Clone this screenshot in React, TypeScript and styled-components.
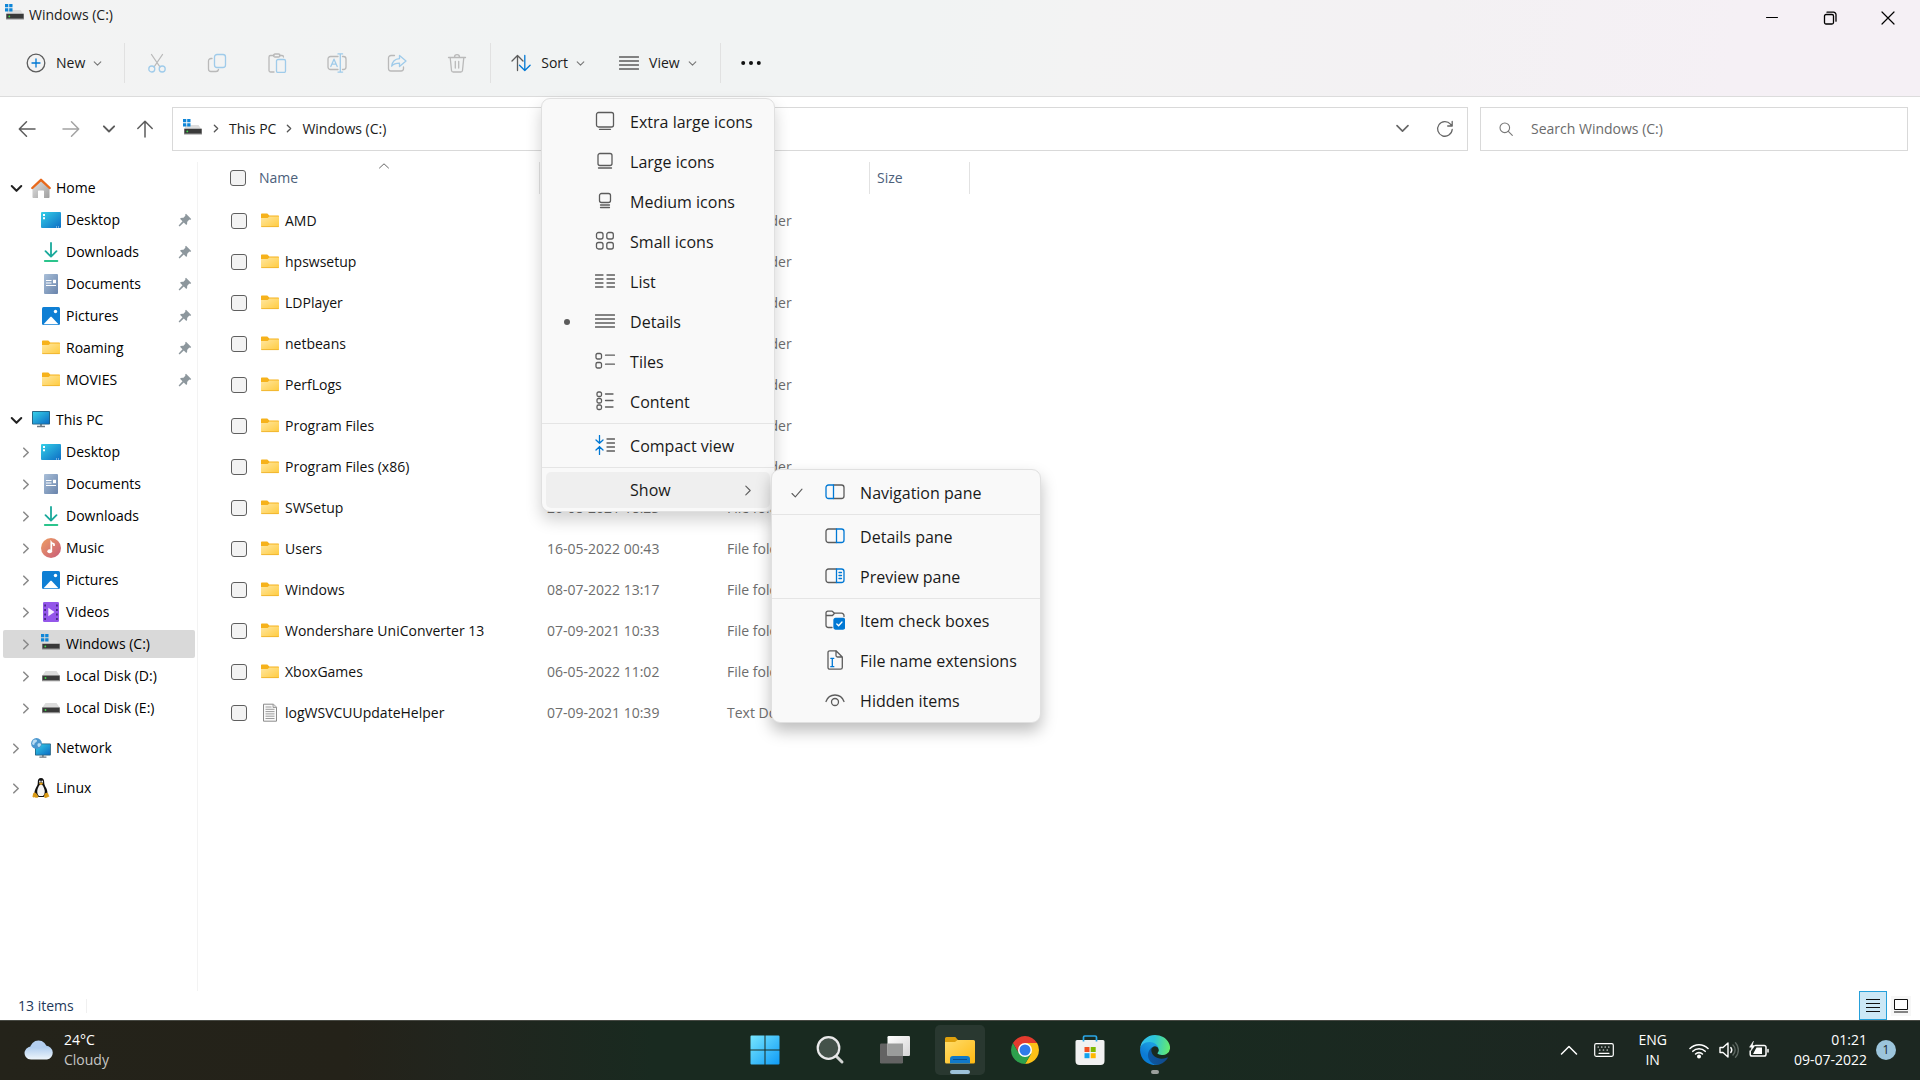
import React from 'react';
import styled, { createGlobalStyle, css } from 'styled-components';

const GlobalStyle = createGlobalStyle`
  *, *::before, *::after { box-sizing: border-box; }
  body { margin: 0; background: #fff; }
  body, button, input { font-family: "Open Sans", "Noto Sans", sans-serif; font-size: 14px; line-height: 20px; }
  button { margin: 0; padding: 0; border: 0; background: none; color: inherit; text-align: left; white-space: nowrap; }
  a { color: inherit; text-decoration: none; }
  svg { display: block; flex: none; }
  ul { list-style: none; margin: 0; padding: 0; }
`;

/* ---------- shell ---------- */

const Shell = styled.div`
  display: flex;
  flex-direction: column;
  min-height: 100vh;
  color: #1b1b1b;
`;

const Header = styled.header`
  background: linear-gradient(100deg, #f3f3f3 0%, #f1f3f3 28%, #f1f3f3 48%, #f3f3f3 56%, #f3f1f3 74%, #f5f0f5 90%);
  border-bottom: 1px solid #dcdcdc;
`;

const TitleBar = styled.div`
  display: flex;
  justify-content: space-between;
  height: 36px;
`;

const Title = styled.h1`
  display: flex;
  gap: 4px;
  margin: 0;
  padding: 4px 0 0 5px;
  font-size: 14px;
  font-weight: 400;
  line-height: 22px;
`;

const WindowButtons = styled.div`
  display: flex;
  padding-right: 3px;
`;

const WindowButton = styled.button`
  display: grid;
  place-items: center;
  width: 58px;
  height: 36px;
`;

const Toolbar = styled.div`
  display: flex;
  align-items: center;
  height: 60px;
  padding: 0 0 6px 16px;
`;

const ToolGroup = styled.div<{ $gap?: number; $pad?: string }>`
  display: flex;
  align-items: center;
  gap: ${p => p.$gap ?? 0}px;
  height: 40px;
  padding: ${p => p.$pad ?? '0'};
  border-right: 1px solid #e1e1e1;
`;

const ToolButton = styled.button`
  display: flex;
  align-items: center;
  gap: 10px;
  height: 40px;
  padding: 0 12px 0 10px;
`;

const ToolLabel = styled.span`
  display: flex;
  align-items: center;
  gap: 8px;
`;

const IconButton = styled.button<{ $w: number }>`
  display: grid;
  place-items: center;
  width: ${p => p.$w}px;
  height: 40px;
`;

/* ---------- address row ---------- */

const NavRow = styled.div`
  display: flex;
  align-items: center;
  height: 65px;
  padding: 0 12px 2px 8px;
`;

const NavButtons = styled.nav`
  display: grid;
  grid-template-columns: 38px 50px 26px 50px;
`;

const Field = styled.div`
  display: flex;
  align-items: center;
  height: 44px;
  border: 1px solid #d9d9d9;
  background: #fff;
`;

const AddressBox = styled(Field)`
  flex: 1;
  padding-left: 10px;
`;

const Crumbs = styled.div`
  display: flex;
  align-items: center;
  flex: 1;
  gap: 10px;
`;

const SearchBox = styled(Field).attrs({ as: 'label' })`
  flex: 0 1 428px;
  gap: 18px;
  margin-left: 12px;
  padding-left: 18px;
`;

const SearchInput = styled.input`
  flex: 1;
  min-width: 0;
  border: 0;
  outline: 0;
  padding: 0;
  background: none;
  &::placeholder { color: #6b6b6b; opacity: 1; }
`;

/* ---------- body ---------- */

const Body = styled.div`
  display: flex;
  flex: 1;
`;

const Sidebar = styled.nav`
  width: 198px;
  padding: 10px 2px 10px 3px;
  border-right: 1px solid #f3f3f3;
`;

const Tree = styled.ul`
  & + & { margin-top: 8px; }
`;

const TreeItem = styled.li`
  padding: 2px 0;
`;

const TreeLink = styled.a<{ $child?: boolean; $selected?: boolean }>`
  display: flex;
  align-items: center;
  height: 28px;
  padding-left: ${p => (p.$child ? 16 : 6)}px;
  padding-right: 3px;
  border-radius: 2px;
  color: #000;
  background: ${p => (p.$selected ? '#d9d9d9' : 'none')};
`;

const Twisty = styled.span`
  display: grid;
  place-items: center;
  width: 14px;
  margin-right: 8px;
`;

const TreeIcon = styled.span`
  display: grid;
  place-items: center;
  width: 20px;
  height: 20px;
  margin-right: 5px;
`;

const TreeText = styled.span`
  flex: 1;
  white-space: nowrap;
`;

const Main = styled.main`
  flex: 1;
  min-width: 0;
`;

const Table = styled.table`
  width: 100%;
  table-layout: fixed;
  border-collapse: collapse;
  border-spacing: 0;
  th, td { padding: 0; text-align: left; font-weight: 400; white-space: nowrap; }
  th { height: 38px; vertical-align: top; color: #4c607a; }
  td { height: 41px; color: #6d6d6d; }
`;

const HeadCell = styled.div<{ $line?: boolean }>`
  position: relative;
  display: flex;
  align-items: center;
  height: 32px;
  padding-left: ${p => (p.$line ? 7 : 0)}px;
  border-right: ${p => (p.$line ? '1px solid #e2e2e2' : '0')};
`;

const SortMark = styled.span`
  position: absolute;
  top: 1px;
  left: 126px;
`;

const CheckHolder = styled.div<{ $head?: boolean }>`
  display: flex;
  align-items: center;
  height: ${p => (p.$head ? 32 : 40)}px;
  padding-left: ${p => (p.$head ? 32 : 33)}px;
`;

const Check = styled.input.attrs({ type: 'checkbox' })`
  appearance: none;
  width: 16px;
  height: 16px;
  margin: 0;
  border: 1px solid #5f5f5f;
  border-radius: 3px;
  background: #f3f3f3;
`;

const FileName = styled.div`
  display: flex;
  align-items: center;
  gap: 6px;
  height: 40px;
  padding-left: 9px;
  color: #111;
`;

const CellText = styled.span`
  padding-left: 7px;
`;

const StatusBar = styled.footer`
  display: flex;
  align-items: center;
  justify-content: space-between;
  height: 29px;
  padding: 0 9px 0 18px;
  color: #1e395b;
`;

const StatusCount = styled.span`
  padding-right: 12px;
  line-height: 14px;
  border-right: 1px solid #f0f0f0;
`;

const StatusViews = styled.div`
  display: flex;
  align-items: center;
  gap: 4px;
`;

const StatusView = styled.button<{ $active?: boolean }>`
  display: grid;
  place-items: center;
  width: 20px;
  height: 20px;
  background: #f7f7f7;
  ${p => p.$active && css`
    width: 28px;
    height: 29px;
    background: #cce8f6;
    border: 1px solid #26a0da;
  `}
`;

/* ---------- menus ---------- */

const MenuAnchor = styled.div`
  position: relative;
`;

const MenuPanel = styled.ul<{ $sub?: boolean }>`
  position: absolute;
  z-index: ${p => (p.$sub ? 20 : 10)};
  top: ${p => (p.$sub ? '3px' : '55px')};
  left: ${p => (p.$sub ? '229px' : '-68px')};
  width: ${p => (p.$sub ? 270 : 234)}px;
  padding: 3px 0 1px;
  border: 1px solid #e0e0e0;
  border-radius: 9px;
  background: #f9f9f9;
  box-shadow: 0 8px 16px rgba(0, 0, 0, ${p => (p.$sub ? 0.26 : 0.18)});
`;

const MenuRow = styled.li<{ $divided?: boolean }>`
  position: relative;
  padding: 2px 4px;
  ${p => p.$divided && css`
    padding-top: 6px;
    &::before {
      content: "";
      position: absolute;
      top: 1px;
      left: 0;
      right: 0;
      height: 1px;
      background: #e5e5e5;
    }
  `}
`;

const MenuButton = styled.button<{ $hot?: boolean }>`
  display: grid;
  grid-template-columns: 34px 43px 1fr auto;
  align-items: center;
  width: 100%;
  height: 36px;
  padding: 0 18px 0 7px;
  border-radius: 5px;
  font-size: 16px;
  color: #1a1a1a;
  background: ${p => (p.$hot ? '#efefef' : 'none')};
`;

const Mark = styled.span`
  display: grid;
  place-items: center;
  width: 28px;
`;

const MenuIcon = styled.span`
  display: block;
  padding-left: 8px;
  height: 22px;
`;

/* ---------- taskbar ---------- */

const Taskbar = styled.footer`
  display: grid;
  grid-template-columns: 1fr auto 1fr;
  align-items: center;
  height: 60px;
  padding: 0 24px 1px;
  border-top: 1px solid #474943;
  color: #fff;
  background: linear-gradient(90deg, #24231a 0%, #242219 18%, #21251e 24%, #192a20 34%, #192a20 62%, #1c2721 82%, #1c2721 100%);
`;

const Weather = styled.button`
  display: flex;
  align-items: center;
  gap: 10px;
  justify-self: start;
`;

const Faded = styled.span`
  color: #c6c6c4;
`;

const Apps = styled.div`
  display: flex;
  gap: 15px;
`;

const AppButton = styled.button<{ $active?: boolean }>`
  display: flex;
  flex-direction: column;
  align-items: center;
  width: 50px;
  height: 50px;
  padding-top: 10px;
  border-radius: 5px;
  background: ${p => (p.$active ? '#293830' : 'none')};
`;

const Running = styled.span<{ $wide?: boolean }>`
  width: ${p => (p.$wide ? 20 : 8)}px;
  height: 4px;
  margin-top: 5px;
  border-radius: 2px;
  background: ${p => (p.$wide ? '#9cc3da' : '#9b9f9c')};
`;

const Tray = styled.div`
  display: flex;
  align-items: center;
  justify-self: end;
`;

const TrayButton = styled.button<{ $gap: number }>`
  display: flex;
  gap: 10px;
  margin-left: ${p => p.$gap}px;
`;

const Stack = styled.span<{ $align?: 'left' | 'center' | 'right' }>`
  display: flex;
  flex-direction: column;
  text-align: ${p => p.$align ?? 'left'};
`;

const Badge = styled.span`
  display: grid;
  place-items: center;
  width: 20px;
  height: 20px;
  margin-left: 9px;
  border-radius: 50%;
  background: #9cc5dc;
  color: #1b2a30;
  font-size: 12px;
`;

/* ---------- icons ---------- */

const GRAY = '#5c5c5c';
const BLUE = '#0078d4';

type SvgProps = { w?: number; h?: number; children: React.ReactNode; stroke?: string; sw?: number; box?: string };
const Line = ({ w = 20, h = 20, stroke = GRAY, sw = 1.3, box, children }: SvgProps) => (
  <svg width={w} height={h} viewBox={box ?? `0 0 ${w} ${h}`} fill="none" stroke={stroke} strokeWidth={sw}
    strokeLinecap="round" strokeLinejoin="round" aria-hidden="true">{children}</svg>
);

const ChevronDown = ({ s = 7, color = '#777', sw = 1.1 }) => (
  <Line w={s + 2} h={s + 2} stroke={color} sw={sw} box="0 0 9 9"><path d="M1.2 2.8 4.5 6.1 7.8 2.8" /></Line>
);
const ChevronRight = ({ w = 6, h = 11, color = '#8a8a8a', sw = 1.6 }) => (
  <Line w={w + 2} h={h} stroke={color} sw={sw} box="0 0 8 11"><path d="M1.8 1.2 6.2 5.5 1.8 9.8" /></Line>
);

const DriveC = () => (
  <svg width="20" height="20" viewBox="0 0 20 20" aria-hidden="true">
    <path d="M3 6h12.5l3.5 5H1z" fill="#dedede" />
    <path d="M0 0h3.3v3.3H0zM4.2 0h3.3v3.3H4.2zM0 4.2h3.3v3.3H0zM4.2 4.2h3.3v3.3H4.2z" fill="#0f86d8" />
    <rect x="1" y="9.5" width="18" height="6" rx=".5" fill="#8c8c8c" />
    <rect x="1.6" y="10" width="16.8" height="4.4" fill="#3a3a3a" />
    <circle cx="4.3" cy="12.4" r=".9" fill="#3fe04b" />
  </svg>
);
const Drive = () => (
  <svg width="20" height="20" viewBox="0 0 20 20" aria-hidden="true">
    <path d="M4.5 5h11L19 10H1z" fill="#dcdcdc" />
    <rect x="1" y="9.2" width="18" height="6" rx=".5" fill="#8c8c8c" />
    <rect x="1.6" y="9.8" width="16.8" height="4.2" fill="#3a3a3a" />
    <circle cx="4.5" cy="12" r=".9" fill="#3fe04b" />
  </svg>
);
const Folder = () => (
  <svg width="18" height="20" viewBox="0 0 18 20" aria-hidden="true">
    <defs><linearGradient id="fold" x1="0" y1="0" x2="1" y2="1">
      <stop offset="0" stopColor="#ffe7a1" /><stop offset="1" stopColor="#ffcb3e" /></linearGradient></defs>
    <path d="M0 3.600C0 3 .4 2.600 1 2.600h5.300l2 2H17c.6 0 1 .4 1 1V9H0z" fill="#f6b21b" />
    <path d="M0 7h6.600L8.400 5.400H18V15.400c0 .4-.3.7-.7.7H.7c-.4 0-.7-.3-.7-.7z" fill="url(#fold)" />
    <path d="M.4 15.600h17.200" stroke="#efb22d" strokeWidth=".9" />
  </svg>
);
const TextFile = () => (
  <svg width="18" height="20" viewBox="0 0 18 20" aria-hidden="true">
    <path d="M2.500 1.200h10l3 3v14h-13z" fill="#fafafa" stroke="#8b8b8b" />
    <path d="M12 1.200v3.300h3.400" fill="#ddd" stroke="#8b8b8b" strokeWidth=".8" />
    <path d="M4.500 4h6M4.500 6.300h9M4.500 8.600h9M4.500 10.900h9M4.500 13.200h9M4.500 15.500h9" stroke="#9c9c9c" />
  </svg>
);
const HomeIcon = () => (
  <svg width="20" height="20" viewBox="0 0 20 20" aria-hidden="true">
    <defs><linearGradient id="wall" x1="0" y1="0" x2="1" y2="1"><stop offset="0" stopColor="#e4e4e4" /><stop offset="1" stopColor="#9f9f9f" /></linearGradient></defs>
    <path d="M1.500 9.500 10 2l8.500 7.500V19c0 .6-.4 1-1 1H13v-6.500c0-.6-.4-1-1-1H8c-.6 0-1 .4-1 1V20H2.500c-.6 0-1-.4-1-1z" fill="url(#wall)" />
    <path d="M1.300 10 10 1.800 18.700 10" fill="none" stroke="#e8691c" strokeWidth="2.400" strokeLinecap="round" strokeLinejoin="round" />
  </svg>
);
const DesktopIcon = () => (
  <svg width="20" height="20" viewBox="0 0 20 20" aria-hidden="true">
    <defs><linearGradient id="desk" x1="0" y1="0" x2="1" y2="1"><stop offset="0" stopColor="#35d0e8" /><stop offset="1" stopColor="#0d6cc4" /></linearGradient></defs>
    <rect y="2" width="20" height="16" rx="1" fill="url(#desk)" />
    <path d="M2 4h2v2H2zM2 7.200h2v2H2z" fill="#fff" />
    <path d="M15 17h1M17 17h1" stroke="#fff" strokeWidth=".8" />
  </svg>
);
const DownloadIcon = () => (
  <svg width="20" height="20" viewBox="0 0 20 20" fill="none" strokeWidth="1.8" strokeLinecap="round" strokeLinejoin="round" aria-hidden="true">
    <path d="M10 1v13.500M4.500 9.200l5.500 5.500 5.500-5.500" stroke="#19a99b" />
    <path d="M3.800 19h12.600" stroke="#2bc48c" />
  </svg>
);
const DocumentIcon = () => (
  <svg width="20" height="20" viewBox="0 0 20 20" aria-hidden="true">
    <defs><linearGradient id="doc" x1="0" y1="0" x2="1" y2="1"><stop offset="0" stopColor="#a9bfd8" /><stop offset="1" stopColor="#6883ab" /></linearGradient></defs>
    <rect x="3" y="0" width="14" height="20" rx="1" fill="url(#doc)" />
    <path d="M5 6.500h5.500M5 9h5.500M5 11.500h10" stroke="#fff" strokeWidth="1.200" />
    <path d="M12 5.800h3v3.400h-3z" fill="#fff" />
  </svg>
);
const PictureIcon = () => (
  <svg width="20" height="20" viewBox="0 0 20 20" aria-hidden="true">
    <rect x="1" y="1" width="18" height="18" rx="1.500" fill="#0f7fd4" />
    <path d="M2.500 18.300 9.300 11c.4-.4 1-.4 1.400 0l6.800 7.300z" fill="#fff" />
    <circle cx="14.500" cy="5.500" r="1.700" fill="#fff" />
  </svg>
);
const MonitorShape = ({ x = 1, y = 2, s = 1 }) => (
  <g transform={`translate(${x} ${y}) scale(${s})`}>
    <path d="M5 15.500h8M9 13v2.500" stroke="#6d7880" strokeWidth="1.600" />
    <rect width="18" height="13.600" rx=".8" fill="#24607f" />
    <rect x=".9" y=".9" width="16.200" height="11.800" fill="url(#desk)" />
  </g>
);
const PcIcon = () => (
  <svg width="20" height="20" viewBox="0 0 20 20" aria-hidden="true"><MonitorShape y={1} /></svg>
);
const NetworkIcon = () => (
  <svg width="20" height="20" viewBox="0 0 20 20" aria-hidden="true">
    <MonitorShape x={4} y={5.5} s={0.88} />
    <circle cx="5.500" cy="5.500" r="5.400" fill="#4b97cf" />
    <path d="M2 2.500c2-2 4.500-1 4 .5S3.500 4.500 3.500 6s-1 1-2.500 0zM7 5.500c1.500-.5 3 0 3 1S8.500 9.500 7.500 9 6 6 7 5.500z" fill="#b9dcf3" />
  </svg>
);
const MusicIcon = () => (
  <svg width="20" height="20" viewBox="0 0 20 20" aria-hidden="true">
    <defs><linearGradient id="mus" x1="0" y1="0" x2="1" y2="1"><stop offset="0" stopColor="#eea063" /><stop offset="1" stopColor="#c85a7a" /></linearGradient></defs>
    <circle cx="10" cy="10" r="10" fill="url(#mus)" />
    <ellipse cx="8.700" cy="13.300" rx="2.400" ry="2" fill="#fff" />
    <path d="M10.300 13.300V4.500c.8 1.200 2 .8 2.700 1.500v2" fill="none" stroke="#fff" strokeWidth="1.700" />
  </svg>
);
const VideoIcon = () => (
  <svg width="20" height="20" viewBox="0 0 20 20" aria-hidden="true">
    <rect x="2" y="0" width="16" height="20" rx="1.200" fill="#9457ea" />
    <path d="M3.200 2.500h1.800v2H3.200zM3.200 7h1.800v2H3.200zM3.200 11.500h1.800v2H3.200zM3.200 16h1.800v2H3.200zM15 2.500h1.800v2H15zM15 7h1.800v2H15zM15 11.500h1.800v2H15zM15 16h1.800v2H15z" fill="#472a86" />
    <path d="M7.300 5.800 13.500 10l-6.200 4.200z" fill="#f6efff" />
  </svg>
);
const TuxIcon = () => (
  <svg width="20" height="20" viewBox="0 0 20 20" aria-hidden="true">
    <path d="M10 0C7.600 0 6.600 1.800 6.800 4.500c.1 2.500-1 3.500-2.100 5.800C3.800 12.200 3.300 14 3.600 16l4 3h5l3.800-3c.2-2-.2-4-1.200-5.900-1.100-2.200-2-3.200-2-5.600C13.200 1.600 12.300 0 10 0z" fill="#111" />
    <path d="M10 6.500c-2 0-3 3.500-3.600 5.500-.5 2 0 4.500 1.600 6h4c1.600-1.500 2.100-4 1.600-6C13 10 12 6.500 10 6.500z" fill="#f4f4f4" />
    <ellipse cx="8.900" cy="3.700" rx=".8" ry="1.100" fill="#fff" /><ellipse cx="11.200" cy="3.700" rx=".8" ry="1.100" fill="#fff" />
    <path d="M8 5.500c1-1.200 3-1.200 4 0-.8 1.700-3.200 1.700-4 0z" fill="#e0a01b" />
    <path d="M1.500 18.500c.5-1.500.3-3.700 1.800-4 1.500-.2 2.500 1.500 3.700 3.300.8 1.300-.3 2.200-1.600 2-1.600-.3-4.200-.2-3.900-1.300zM18.500 18.300c-1.200-.8-.8-3.300-2.300-3.500-1.500-.3-3 .8-3 2.600 0 1.300-.2 2.500 1.200 2.500s3.100-1 4.100-1.600z" fill="#d99a16" />
  </svg>
);
const PinIcon = () => (
  <svg width="14" height="14" viewBox="0 0 14 14" aria-hidden="true">
    <path d="M8 .8 13.200 6l-1 .9-.9-.3-2.200 2.300c.3 1.300 0 2.300-.8 3.100L5.800 9.500 1.600 13.400l-1-1L4.500 8.200 2 5.700c.8-.8 1.800-1.100 3.100-.8l2.300-2.200-.3-.9z" fill="#8d979d" />
  </svg>
);

const DIM = '#b9b9b9';
const PALE = '#9fcbea';

const toolIcons: { label: string; art: React.ReactNode }[] = [
  { label: 'Cut', art: <><path d="M4.500 1.500 13 14M15.500 1.500 7 14" /><g stroke={PALE}><circle cx="4.800" cy="16" r="3" /><circle cx="15.200" cy="16" r="3" /></g></> },
  { label: 'Copy', art: <><path d="M5 5.500H4a2.500 2.500 0 0 0-2.500 2.500v8A2.500 2.500 0 0 0 4 18.500h5a2.500 2.500 0 0 0 2.500-2" /><rect x="7.500" y="1.500" width="11" height="13" rx="2.500" stroke={PALE} /></> },
  { label: 'Paste', art: <><path d="M7 2.500H3.500A1.500 1.500 0 0 0 2 4v13.500A1.500 1.500 0 0 0 3.500 19H7M12.500 2.500H15A1.500 1.500 0 0 1 16.500 4" /><rect x="6.500" y="1" width="6.500" height="3" rx="1.500" /><rect x="9.500" y="6.500" width="9" height="13" rx="1.500" stroke={PALE} /></> },
  { label: 'Rename', art: <><path d="M11 3.500H3.500a2.500 2.500 0 0 0-2.500 2.500v8a2.500 2.500 0 0 0 2.500 2.500H11M15.500 3.500h1a2.500 2.500 0 0 1 2.500 2.500v8a2.500 2.500 0 0 1-2.500 2.500h-1" /><g stroke={PALE}><path d="M3.800 13.500 7 6.200l3.200 7.300M5 11.200h4M13.300 1v18M11 .9h4.600M11 19.100h4.600" /></g></> },
  { label: 'Share', art: <><path d="M7.500 2.500H4A2.500 2.500 0 0 0 1.500 5v10.500A2.500 2.500 0 0 0 4 18h10a2.500 2.500 0 0 0 2.500-2.500V14" /><path d="M12.500 2.500 19 8l-6.500 5.500v-3.300c-3.500 0-6 .8-7.800 3C5.200 9 7.800 6 12.500 5.700z" stroke={PALE} /></> },
  { label: 'Delete', art: <path d="M1.500 4.500h17M3.200 4.500l1.300 13a1.700 1.700 0 0 0 1.700 1.500h7.600a1.700 1.700 0 0 0 1.700-1.500l1.300-13M7.500 4.200a2.500 2.500 0 0 1 5 0M8.300 8.500v6.500M11.700 8.500v6.500" /> },
];

const Lines = () => <path d="M.5 4h19M.5 8h19M.5 12h19M.5 16h19" />;
const Pane = ({ x, children }: { x: 'left' | 'right'; children?: React.ReactNode }) => (
  <>
    {x === 'left'
      ? <><path d="M8.500 3H16.500a2.500 2.500 0 0 1 2.500 2.500v8.500a2.500 2.500 0 0 1-2.500 2.500H8.500" /><path stroke={BLUE} d="M8.500 3H3.500A2.500 2.500 0 0 0 1 5.500V14a2.500 2.500 0 0 0 2.500 2.500h5z" /></>
      : <><path d="M11.500 3H3.500A2.500 2.500 0 0 0 1 5.500V14a2.500 2.500 0 0 0 2.500 2.500h8" /><path stroke={BLUE} d="M11.500 3h5A2.500 2.500 0 0 1 19 5.500V14a2.500 2.500 0 0 1-2.500 2.500h-5z" /></>}
    {children}
  </>
);

type MenuEntry = { label: string; art?: React.ReactNode; mark?: 'dot' | 'check'; divided?: boolean };

const viewMenu: MenuEntry[] = [
  { label: 'Extra large icons', art: <><rect x="1.500" y="1.500" width="17" height="14.500" rx="2" /><path d="M4.500 18.300h11" /></> },
  { label: 'Large icons', art: <><rect x="3" y="2.500" width="14" height="12" rx="2" /><path d="M3.500 17h13" /></> },
  { label: 'Medium icons', art: <><rect x="4.500" y="2.500" width="11" height="9" rx="2" /><path d="M5.500 14h9M5.500 16.500h9" /></> },
  { label: 'Small icons', art: <><rect x="1.500" y="1.500" width="6.500" height="6.500" rx="2" /><rect x="11.800" y="1.500" width="6.500" height="6.500" rx="2" /><rect x="1.500" y="11.500" width="6.500" height="6.500" rx="2" /><rect x="11.800" y="11.500" width="6.500" height="6.500" rx="2" /></> },
  { label: 'List', art: <path d="M.5 4H8M.5 8H8M.5 12H8M.5 16H8M12 4h7.500M12 8h7.500M12 12h7.500M12 16h7.500" /> },
  { label: 'Details', mark: 'dot', art: <Lines /> },
  { label: 'Tiles', art: <><rect x="1" y="2.500" width="5.500" height="5.500" rx="1.500" /><rect x="1" y="11.500" width="5.500" height="5.500" rx="1.500" /><path d="M10.500 4.200h9M10.500 13.200h9" /></> },
  { label: 'Content', art: <><rect x="2" y="1" width="4.500" height="4.500" rx="1.500" /><rect x="2" y="7.500" width="4.500" height="4.500" rx="1.500" /><rect x="2" y="14" width="4.500" height="4.500" rx="1.500" /><path d="M10.500 3H18M10.500 9.500H18M10.500 16H18" /></> },
  { label: 'Compact view', divided: true, art: <><path d="M12 4h7.500M12 8h7.500M12 12h7.500M12 16h7.500" /><path stroke={BLUE} d="M4.500.5V8M1 5l3.500 3.300L8 5M4.500 19.500v-8M1 15l3.500-3.300L8 15" /></> },
];

const showMenu: MenuEntry[] = [
  { label: 'Navigation pane', mark: 'check', art: <Pane x="left" /> },
  { label: 'Details pane', divided: true, art: <Pane x="right" /> },
  { label: 'Preview pane', art: <Pane x="right"><path stroke={BLUE} d="M14 6.500h2.500M14 9.500h2.500M14 12.500h2.500" /></Pane> },
  { label: 'Item check boxes', divided: true, art: <><path d="M7 17.500H3.500A2.500 2.500 0 0 1 1 15V3A1.800 1.800 0 0 1 2.800 1.200h4.400L9.500 3.200h7A2.500 2.500 0 0 1 19 5.700v.8M1 5.500h6.500l2-2.200" /><rect x="9" y="8.500" width="10.500" height="10.500" rx="1.500" fill={BLUE} stroke={BLUE} /><path d="m11.800 14 1.800 1.800 3.400-3.800" stroke="#fff" /></> },
  { label: 'File name extensions', art: <><path d="M11 .8H4.800A1.800 1.800 0 0 0 3 2.600v14.800a1.800 1.800 0 0 0 1.800 1.800h10.700a1.800 1.800 0 0 0 1.800-1.800V7L11 .8v4.700A1.500 1.500 0 0 0 12.500 7h4.800" /><path stroke={BLUE} d="M7.300 8.500v8M5.800 8.300h3M5.800 16.700h3" /></> },
  { label: 'Hidden items', art: <><circle cx="10" cy="12" r="3.500" /><path d="M1 11.500C2.500 7.300 5.800 5 10 5s7.500 2.300 9 6.500" /></> },
];

const MenuItem = ({ entry }: { entry: MenuEntry }) => (
  <MenuRow $divided={entry.divided} role="none">
    <MenuButton role="menuitem">
      <Mark>
        {entry.mark === 'dot' && <svg width="6" height="6" aria-hidden="true"><circle cx="3" cy="3" r="3" fill={GRAY} /></svg>}
        {entry.mark === 'check' && <Line w={12} h={10} sw={1.1}><path d="M1 5.500 4.300 8.800 11 1.200" /></Line>}
      </Mark>
      <MenuIcon><Line>{entry.art}</Line></MenuIcon>
      <span>{entry.label}</span>
    </MenuButton>
  </MenuRow>
);

const quickAccess: [string, React.ReactNode][] = [
  ['Desktop', <DesktopIcon />], ['Downloads', <DownloadIcon />], ['Documents', <DocumentIcon />],
  ['Pictures', <PictureIcon />], ['Roaming', <Folder />], ['MOVIES', <Folder />],
];
const thisPc: [string, React.ReactNode][] = [
  ['Desktop', <DesktopIcon />], ['Documents', <DocumentIcon />], ['Downloads', <DownloadIcon />],
  ['Music', <MusicIcon />], ['Pictures', <PictureIcon />], ['Videos', <VideoIcon />],
  ['Windows (C:)', <DriveC />], ['Local Disk (D:)', <Drive />], ['Local Disk (E:)', <Drive />],
];

type NodeProps = { text: string; icon: React.ReactNode; child?: boolean; open?: boolean; leaf?: boolean; pinned?: boolean; selected?: boolean };
const TreeNode = ({ text, icon, child, open, leaf, pinned, selected }: NodeProps) => (
  <TreeItem>
    <TreeLink href="#" $child={child} $selected={selected}>
      <Twisty>{!leaf && (open ? <ChevronDown s={11} color="#222" sw={1.4} /> : <ChevronRight />)}</Twisty>
      <TreeIcon>{icon}</TreeIcon>
      <TreeText>{text}</TreeText>
      {pinned && <PinIcon />}
    </TreeLink>
  </TreeItem>
);

const files: { name: string; type: string; date?: string }[] = [
  { name: 'AMD', type: 'File folder' },
  { name: 'hpswsetup', type: 'File folder' },
  { name: 'LDPlayer', type: 'File folder' },
  { name: 'netbeans', type: 'File folder' },
  { name: 'PerfLogs', type: 'File folder' },
  { name: 'Program Files', type: 'File folder' },
  { name: 'Program Files (x86)', type: 'File folder' },
  { name: 'SWSetup', type: 'File folder', date: '26-08-2021 18:23' },
  { name: 'Users', type: 'File folder', date: '16-05-2022 00:43' },
  { name: 'Windows', type: 'File folder', date: '08-07-2022 13:17' },
  { name: 'Wondershare UniConverter 13', type: 'File folder', date: '07-09-2021 10:33' },
  { name: 'XboxGames', type: 'File folder', date: '06-05-2022 11:02' },
  { name: 'logWSVCUUpdateHelper', type: 'Text Doc', date: '07-09-2021 10:39' },
];

const apps: { name: string; active?: boolean; running?: boolean; art: React.ReactNode }[] = [
  { name: 'Start', art: <><defs><linearGradient id="win" x1="0" y1="0" x2="1" y2="1"><stop offset="0" stopColor="#77e6ff" /><stop offset="1" stopColor="#0f9bf5" /></linearGradient></defs><path d="M.5 1.500a1 1 0 0 1 1-1h13v14h-14zM15.500.5h13a1 1 0 0 1 1 1v13h-14zM.5 15.500h14v14h-13a1 1 0 0 1-1-1zM15.500 15.500h14v13a1 1 0 0 1-1 1h-13z" fill="url(#win)" /></> },
  { name: 'Search', art: <><path d="m20.500 20.500 6.500 6.500" stroke="#d3d6d4" strokeWidth="3" strokeLinecap="round" /><circle cx="13.500" cy="13" r="10.800" fill="#44524a" stroke="#e9e9ea" strokeWidth="2.200" /></> },
  { name: 'Task view', art: <><defs><linearGradient id="tv" x1="0" y1="0" x2="1" y2="1"><stop offset="0" stopColor="#fff" /><stop offset="1" stopColor="#d5d5d5" /></linearGradient></defs><rect x="0" y="8.500" width="23" height="20" rx="1.200" fill="#636363" /><rect x="7.500" y="1" width="22.500" height="20" rx="1.200" fill="url(#tv)" /><path d="M7.500 8.500H23V21H7.500z" fill="#9a9c9b" /></> },
  { name: 'File Explorer', active: true, running: true, art: <><defs><linearGradient id="fe" x1="0" y1="0" x2="1" y2="1"><stop offset="0" stopColor="#ffdc6b" /><stop offset="1" stopColor="#ffb911" /></linearGradient></defs><path d="M0 3.500A1.500 1.500 0 0 1 1.500 2h8.800l2.700 3H22v6H0z" fill="#dea00d" /><path d="M0 7h10l2.500-2H28.500A1.500 1.500 0 0 1 30 6.500V27a1.500 1.500 0 0 1-1.500 1.500h-27A1.500 1.500 0 0 1 0 27z" fill="url(#fe)" /><path d="M5 28.500V24a3 3 0 0 1 3-3h14a3 3 0 0 1 3 3v4.500z" fill="#1079c9" /><path d="M8 24.500h14" stroke="#0a4f8f" /></> },
  { name: 'Chrome', art: <><path d="M15 8h12.100A14 14 0 0 1 15 29l6.200-10.500z" fill="#fcc117" /><path d="M2.900 8A14 14 0 0 1 27.100 8H15l-6.300 10z" fill="#e33b2e" /><path d="M2.900 8 9 18.500h12.200L15 29A14 14 0 0 1 2.900 8z" fill="#2da04c" /><circle cx="15" cy="15" r="7" fill="#fff" /><circle cx="15" cy="15" r="5.500" fill="#2f7bea" /></> },
  { name: 'Microsoft Store', art: <><path d="M8.500 6.500V2.300A1.300 1.300 0 0 1 9.800 1h10.400a1.300 1.300 0 0 1 1.300 1.300v4.200" fill="none" stroke="#2aa6e6" strokeWidth="1.700" /><path d="M.5 6.500a1.500 1.500 0 0 1 1.500-1.500h26a1.500 1.500 0 0 1 1.500 1.500V26a4 4 0 0 1-4 4h-21a4 4 0 0 1-4-4z" fill="#f1f1f1" /><path d="M9.500 12h5v5h-5z" fill="#f05022" /><path d="M15.700 12h5v5h-5z" fill="#7fb900" /><path d="M9.500 18.200h5v5h-5z" fill="#10a3ef" /><path d="M15.700 18.200h5v5h-5z" fill="#feb800" /><path d="M8.500 5V6.500M21.500 5V6.500" stroke="#2aa6e6" strokeWidth="1.700" /></> },
  {
    name: 'Microsoft Edge', running: true, art: <g transform="translate(-.5 -.5) scale(.1172)">
      <defs>
        <linearGradient id="ea" x1="0" y1=".7" x2="1" y2=".7"><stop offset="0" stopColor="#0c59a4" /><stop offset="1" stopColor="#114a8b" /></linearGradient>
        <linearGradient id="eb" x1=".7" y1=".2" x2=".3" y2="1"><stop offset="0" stopColor="#1b9de2" /><stop offset=".6" stopColor="#0d7ad4" /><stop offset="1" stopColor="#0680d7" /></linearGradient>
        <linearGradient id="ec" x1="0" y1=".4" x2="1" y2=".5"><stop offset="0" stopColor="#35c1f1" /><stop offset=".45" stopColor="#2cc4d8" /><stop offset="1" stopColor="#66eb6e" /></linearGradient>
      </defs>
      <path fill="url(#ea)" d="M235.680 195.460a93.730 93.730 0 0 1-10.540 4.710 101.870 101.870 0 0 1-35.900 6.460c-47.320 0-88.540-32.550-88.540-74.320A31.480 31.480 0 0 1 117.130 105c-42.800 1.800-53.800 46.400-53.800 72.530 0 73.880 68.090 81.370 82.760 81.370 7.910 0 19.840-2.300 27-4.560l1.310-.44a128.340 128.340 0 0 0 66.600-52.800 4 4 0 0 0-5.320-5.640Z" />
      <path fill="url(#eb)" d="M110.340 246.340A79.200 79.200 0 0 1 87.600 225a80.720 80.720 0 0 1 29.530-120c3.120-1.470 8.450-4.130 15.540-4a32.350 32.350 0 0 1 25.690 13 31.880 31.880 0 0 1 6.360 18.660c0-.21 24.460-79.600-80-79.600-43.900 0-80 41.660-80 78.210a130.150 130.150 0 0 0 12.110 56 128 128 0 0 0 156.380 67.110 75.550 75.550 0 0 1-62.780-8Z" />
      <path fill="url(#ec)" d="M156.940 153.780c-.81 1.050-3.300 2.500-3.300 5.660 0 2.610 1.700 5.120 4.720 7.230 14.380 10 41.490 8.680 41.560 8.680a59.560 59.560 0 0 0 30.270-8.350 61.380 61.380 0 0 0 30.430-52.880c.26-22.410-8-37.310-11.340-43.910C228.090 28.760 182.350 4.720 132.610 4.720a128 128 0 0 0-128 126.200c.48-36.540 36.800-66.050 80-66.050 3.500 0 23.460.34 42 10.070 16.340 8.580 24.900 18.940 30.850 29.210 6.180 10.670 7.280 24.150 7.280 29.520 0 5.370-2.740 13.330-7.800 19.910Z" />
    </g>,
  },
];

export default function App() {
  return (
    <Shell>
      <GlobalStyle />
      <Header>
        <TitleBar>
          <Title><DriveC />Windows (C:)</Title>
          <WindowButtons>
            <WindowButton aria-label="Minimize"><Line w={12} h={12} stroke="#000" sw={1}><path d="M.5 5.500h11" /></Line></WindowButton>
            <WindowButton aria-label="Restore"><Line w={14} h={14} stroke="#000" sw={1.3}><rect x="1.500" y="3.500" width="9" height="9.500" rx="1.500" /><path d="M4 1.200h6.500A2.500 2.500 0 0 1 13 3.700v6.500" /></Line></WindowButton>
            <WindowButton aria-label="Close"><Line w={14} h={14} stroke="#000" sw={1.2}><path d="m1 1 12 12M13 1 1 13" /></Line></WindowButton>
          </WindowButtons>
        </TitleBar>
        <Toolbar>
          <ToolGroup $pad="0 10px 0 0">
            <ToolButton>
              <Line><circle cx="10" cy="10" r="8.800" /><path d="M10 6v8M6 10h8" stroke={BLUE} /></Line>
              <ToolLabel>New <ChevronDown /></ToolLabel>
            </ToolButton>
          </ToolGroup>
          <ToolGroup $pad="0 3px 0 2px">
            {toolIcons.map(t => (
              <IconButton key={t.label} $w={60} aria-label={t.label} disabled><Line stroke={DIM}>{t.art}</Line></IconButton>
            ))}
          </ToolGroup>
          <ToolGroup $pad="0 11px 0 10px" $gap={12}>
            <ToolButton>
              <Line><path d="M6.500 17.500V2.500M1 8l5.500-5.500L12 8" /><path d="M13.800 2.500v15M8.500 12.200l5.300 5.300 5.300-5.300" stroke={BLUE} /></Line>
              <ToolLabel>Sort <ChevronDown /></ToolLabel>
            </ToolButton>
            <MenuAnchor>
              <ToolButton aria-haspopup="menu" aria-expanded="true">
                <Line><Lines /></Line>
                <ToolLabel>View <ChevronDown /></ToolLabel>
              </ToolButton>
              <MenuPanel role="menu" aria-label="View">
                {viewMenu.map(m => <MenuItem key={m.label} entry={m} />)}
                <MenuRow $divided role="none">
                  <MenuButton $hot role="menuitem" aria-haspopup="menu" aria-expanded="true">
                    <span /><span /><span>Show</span><ChevronRight color="#5c5c5c" sw={1.1} />
                  </MenuButton>
                  <MenuPanel $sub role="menu" aria-label="Show">
                    {showMenu.map(m => <MenuItem key={m.label} entry={m} />)}
                  </MenuPanel>
                </MenuRow>
              </MenuPanel>
            </MenuAnchor>
          </ToolGroup>
          <IconButton $w={60} aria-label="See more">
            <svg width="20" height="6" aria-hidden="true"><g fill="#111"><circle cx="2.200" cy="3" r="2" /><circle cx="10" cy="3" r="2" /><circle cx="17.800" cy="3" r="2" /></g></svg>
          </IconButton>
        </Toolbar>
      </Header>

      <NavRow>
        <NavButtons aria-label="History">
          <IconButton $w={38} aria-label="Back"><Line w={18} h={18} sw={1.5}><path d="M17 9H1.500M8.500 1.800 1.300 9l7.200 7.200" /></Line></IconButton>
          <IconButton $w={50} aria-label="Forward"><Line w={18} h={18} sw={1.5} stroke="#a3a3a3"><path d="M1 9h15.500M9.500 1.800 16.700 9l-7.200 7.200" /></Line></IconButton>
          <IconButton $w={26} aria-label="Recent locations"><ChevronDown s={12} color={GRAY} sw={1.2} /></IconButton>
          <IconButton $w={46} aria-label="Up"><Line w={18} h={18} sw={1.5}><path d="M9 17V1.500M1.800 8.500 9 1.300l7.200 7.200" /></Line></IconButton>
        </NavButtons>
        <AddressBox>
          <Crumbs>
            <DriveC />
            <ChevronRight w={4} h={9} color="#555" sw={1.8} />
            <button>This PC</button>
            <ChevronRight w={4} h={9} color="#555" sw={1.8} />
            <button>Windows (C:)</button>
          </Crumbs>
          <IconButton $w={42} aria-label="Previous locations"><ChevronDown s={13} color="#666" sw={1} /></IconButton>
          <IconButton $w={44} aria-label="Refresh"><Line w={18} h={18} stroke="#666" sw={1.3}><path d="M16.200 9.500A7.300 7.300 0 1 1 14.500 4.200L16 5.800M16.200 1.500v4.500h-4.500" /></Line></IconButton>
        </AddressBox>
        <SearchBox>
          <Line w={14} h={14} stroke="#777" sw={1.1}><circle cx="5.800" cy="5.800" r="4.800" /><path d="m9.300 9.300 4 4" /></Line>
          <SearchInput type="search" aria-label="Search Windows (C:)" placeholder="Search Windows (C:)" />
        </SearchBox>
      </NavRow>

      <Body>
        <Sidebar aria-label="Folders">
          <Tree>
            <TreeNode text="Home" icon={<HomeIcon />} open />
            {quickAccess.map(([t, i]) => <TreeNode key={t} text={t} icon={i} child leaf pinned />)}
          </Tree>
          <Tree>
            <TreeNode text="This PC" icon={<PcIcon />} open />
            {thisPc.map(([t, i]) => <TreeNode key={t} text={t} icon={i} child selected={t === 'Windows (C:)'} />)}
          </Tree>
          <Tree><TreeNode text="Network" icon={<NetworkIcon />} /></Tree>
          <Tree><TreeNode text="Linux" icon={<TuxIcon />} /></Tree>
        </Sidebar>
        <Main>
          <Table>
            <colgroup>
              <col style={{ width: 54 }} /><col style={{ width: 288 }} /><col style={{ width: 180 }} />
              <col style={{ width: 150 }} /><col style={{ width: 100 }} /><col />
            </colgroup>
            <thead>
              <tr>
                <th><CheckHolder $head><Check aria-label="Select all" /></CheckHolder></th>
                <th>
                  <HeadCell $line>Name
                    <SortMark><Line w={12} h={6} stroke="#666" sw={1}><path d="M1.500 5 6 .8 10.500 5" /></Line></SortMark>
                  </HeadCell>
                </th>
                <th aria-label="Date modified"><HeadCell $line /></th>
                <th aria-label="Type"><HeadCell $line /></th>
                <th><HeadCell $line>Size</HeadCell></th>
                <th />
              </tr>
            </thead>
            <tbody>
              {files.map(f => (
                <tr key={f.name}>
                  <td><CheckHolder><Check aria-label={`Select ${f.name}`} /></CheckHolder></td>
                  <td><FileName>{f.type === 'File folder' ? <Folder /> : <TextFile />}{f.name}</FileName></td>
                  <td><CellText>{f.date}</CellText></td>
                  <td><CellText>{f.type}</CellText></td>
                  <td /><td />
                </tr>
              ))}
            </tbody>
          </Table>
        </Main>
      </Body>

      <StatusBar>
        <StatusCount>13 items</StatusCount>
        <StatusViews>
          <StatusView $active aria-label="Details view"><svg width="14" height="14" aria-hidden="true"><path d="M0 .5h14M0 4.500h14M0 8.500h14M0 12.500h14" stroke="#111" /></svg></StatusView>
          <StatusView aria-label="Thumbnail view"><svg width="14" height="14" aria-hidden="true"><path d="M.5.5h13v10H.5zM0 13h14" fill="#fff" stroke="#111" /></svg></StatusView>
        </StatusViews>
      </StatusBar>

      <Taskbar>
        <Weather>
          <svg width="30" height="20" viewBox="0 0 30 20" aria-hidden="true">
            <defs><linearGradient id="cl" x1="0" y1="0" x2="0" y2="1"><stop offset="0" stopColor="#a9c9ee" /><stop offset="1" stopColor="#eef5fb" /></linearGradient></defs>
            <circle cx="14.500" cy="9" r="8.500" fill="#b4cff0" />
            <path d="M7 19.500A6.500 6.500 0 1 1 10.500 7.500c2 .3 3.500 1.500 4.500 1.500s3-3.200 7-3.200a6.900 6.900 0 0 1 1 13.700z" fill="url(#cl)" />
          </svg>
          <Stack><span>24°C</span><Faded>Cloudy</Faded></Stack>
        </Weather>
        <Apps>
          {apps.map(a => (
            <AppButton key={a.name} $active={a.active} aria-label={a.name}>
              <svg width="30" height="30" viewBox="0 0 30 30" aria-hidden="true">{a.art}</svg>
              {a.running && <Running $wide={a.active} />}
            </AppButton>
          ))}
        </Apps>
        <Tray>
          <TrayButton $gap={0} aria-label="Show hidden icons"><Line w={18} h={10} stroke="#fff" sw={1.5}><path d="M1.500 9 9 1.500 16.500 9" /></Line></TrayButton>
          <TrayButton $gap={16} aria-label="Touch keyboard">
            <Line w={20} h={14} stroke="#fff" sw={1.2}><rect x=".7" y=".7" width="18.600" height="12.600" rx="1.500" /><path d="M4 4h.5M7.500 4H8M11 4h.5M14.500 4h.5M5.500 7H6M9.200 7h.5M13 7h.5M5 10.300h10" /></Line>
          </TrayButton>
          <TrayButton $gap={24}><Stack $align="center"><span>ENG</span><span>IN</span></Stack></TrayButton>
          <TrayButton $gap={22} aria-label="Network, volume, battery">
            <Line w={20} h={18} stroke="#fff" sw={1.6}><path d="M1 7.500a12.700 12.700 0 0 1 18 0M3.800 10.300a8.800 8.800 0 0 1 12.400 0M6.600 13a4.800 4.800 0 0 1 6.800 0" /><circle cx="10" cy="15.500" r="1.200" fill="#fff" /></Line>
            <Line w={20} h={18} stroke="#fff" sw={1.4}><path d="M1 6.500h3l5-4.500v14l-5-4.500H1z" /><path d="M11.800 6.500a4 4 0 0 1 0 5" /><path d="M14 4a7 7 0 0 1 0 10M16.500 1.800a10.500 10.500 0 0 1 0 14.400" stroke="#5d6761" /></Line>
            <Line w={20} h={18} stroke="#fff" sw={1.5}><path d="M6.500 4.500h8.700A1.800 1.800 0 0 1 17 6.300v7a1.800 1.800 0 0 1-1.800 1.800H3a1.800 1.800 0 0 1-1.800-1.800V10M19 8.500v2.500" /><path d="M7.500 6.500H13v6.500H4z" fill="#fff" stroke="none" /><path d="M4.300.5.500 6.200h2.300L1.800 10 6 4.500H3.500z" fill="#fff" strokeWidth=".5" /></Line>
          </TrayButton>
          <TrayButton $gap={25}><Stack $align="right"><span>01:21</span><span>09-07-2022</span></Stack></TrayButton>
          <Badge>1</Badge>
        </Tray>
      </Taskbar>
    </Shell>
  );
}
